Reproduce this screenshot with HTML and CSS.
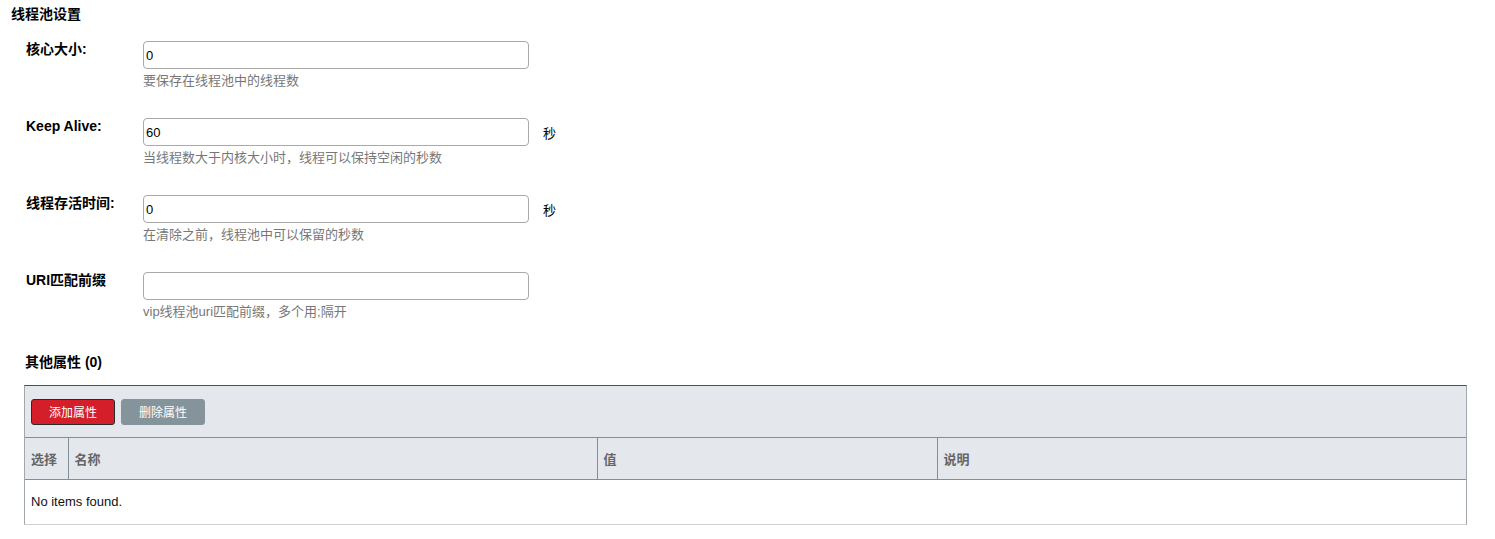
FILE: index.html
```html
<!DOCTYPE html>
<html lang="zh">
<head>
<meta charset="utf-8">
<title>线程池设置</title>
<link rel="stylesheet" href="styles.css">
</head>
<body>
<div class="page">
  <h3 class="section-title">线程池设置</h3>
  <div class="form">
    <div class="row">
      <label class="label">核心大小:</label>
      <div class="field">
        <div class="control"><input class="input" type="text" value="0"></div>
        <div class="hint">要保存在线程池中的线程数</div>
      </div>
    </div>
    <div class="row">
      <label class="label">Keep Alive:</label>
      <div class="field">
        <div class="control"><input class="input" type="text" value="60"><span class="unit">秒</span></div>
        <div class="hint">当线程数大于内核大小时，线程可以保持空闲的秒数</div>
      </div>
    </div>
    <div class="row">
      <label class="label">线程存活时间:</label>
      <div class="field">
        <div class="control"><input class="input" type="text" value="0"><span class="unit">秒</span></div>
        <div class="hint">在清除之前，线程池中可以保留的秒数</div>
      </div>
    </div>
    <div class="row">
      <label class="label">URI匹配前缀</label>
      <div class="field">
        <div class="control"><input class="input" type="text" value=""></div>
        <div class="hint">vip线程池uri匹配前缀，多个用;隔开</div>
      </div>
    </div>
  </div>
  <h4 class="sub-title">其他属性 (0)</h4>
  <div class="grid">
    <div class="toolbar">
      <button class="btn btn-primary" type="button">添加属性</button>
      <button class="btn btn-muted" type="button">删除属性</button>
    </div>
    <table class="table">
      <thead>
        <tr>
          <th class="c-select">选择</th>
          <th class="c-name">名称</th>
          <th class="c-value">值</th>
          <th class="c-desc">说明</th>
        </tr>
      </thead>
      <tbody>
        <tr><td class="empty" colspan="4">No items found.</td></tr>
      </tbody>
    </table>
  </div>
</div>
</body>
</html>
```
FILE: styles.css
```css
* { box-sizing: border-box; }
html, body { margin: 0; padding: 0; background: #fff; }
body {
  font-family: "Liberation Sans", Arial, "Noto Sans CJK SC", sans-serif;
  font-size: 13px;
  color: #000;
}
.page { padding: 6px 28px 0 0; }
.section-title {
  margin: 0 0 0 11px;
  font-size: 14px;
  font-weight: bold;
  line-height: 16px;
}
.form { margin-top: 19px; }
.row {
  display: flex;
  align-items: flex-start;
  padding-left: 26px;
  margin-bottom: 29px;
}
.label {
  width: 117px;
  flex: none;
  font-size: 14px;
  font-weight: bold;
  line-height: 16px;
  padding-top: 0;
}
.field { display: flex; flex-direction: column; }
.control { display: flex; align-items: center; }
.input {
  width: 386px;
  height: 28px;
  border: 1px solid #a9a9a9;
  border-radius: 4px;
  padding: 0 2px;
  font-family: "Liberation Sans", Arial, sans-serif;
  font-size: 13px;
  color: #000;
  background: #fff;
  outline: none;
}
.unit { margin-left: 14px; font-size: 13px; }
.hint {
  margin-top: 4px;
  color: #777;
  line-height: 16px;
}
.sub-title {
  margin: 34px 0 0 25px;
  font-size: 14px;
  font-weight: bold;
  line-height: 16px;
}
.grid {
  margin: 15px 0 0 24px;
  border-top: 1px solid #3f5566;
  border-left: 1px solid #a0a8ad;
  border-right: 1px solid #a0a8ad;
  border-bottom: 1px solid #cfcfcf;
}
.toolbar {
  background: #e4e8ec;
  height: 51px;
  display: flex;
  align-items: center;
  gap: 6px;
  padding: 0 0 0 6px;
}
.btn {
  height: 26px;
  width: 84px;
  border-radius: 3px;
  font-family: "Liberation Sans", Arial, "Noto Sans CJK SC", sans-serif;
  font-size: 12px;
  color: #fff;
  padding: 0;
}
.btn-primary { background: #d41f2a; border: 1px solid #2a2a2a; }
.btn-muted { background: #85939b; border: 1px solid #85939b; }
.table {
  width: 100%;
  border-collapse: collapse;
  table-layout: fixed;
}
.table th {
  background: #e4e8ec;
  height: 42px;
  border-top: 1px solid #7f9099;
  border-bottom: 1px solid #7f9099;
  border-left: 1px solid #7f9099;
  text-align: left;
  padding: 0 6px;
  color: #666;
  font-weight: bold;
  font-size: 13px;
}
.table th:first-child { border-left: none; }
.c-select { width: 43px; }
.c-name { width: 529px; }
.c-value { width: 340px; }
.empty {
  height: 44px;
  padding: 0 6px;
  color: #111;
}
```
